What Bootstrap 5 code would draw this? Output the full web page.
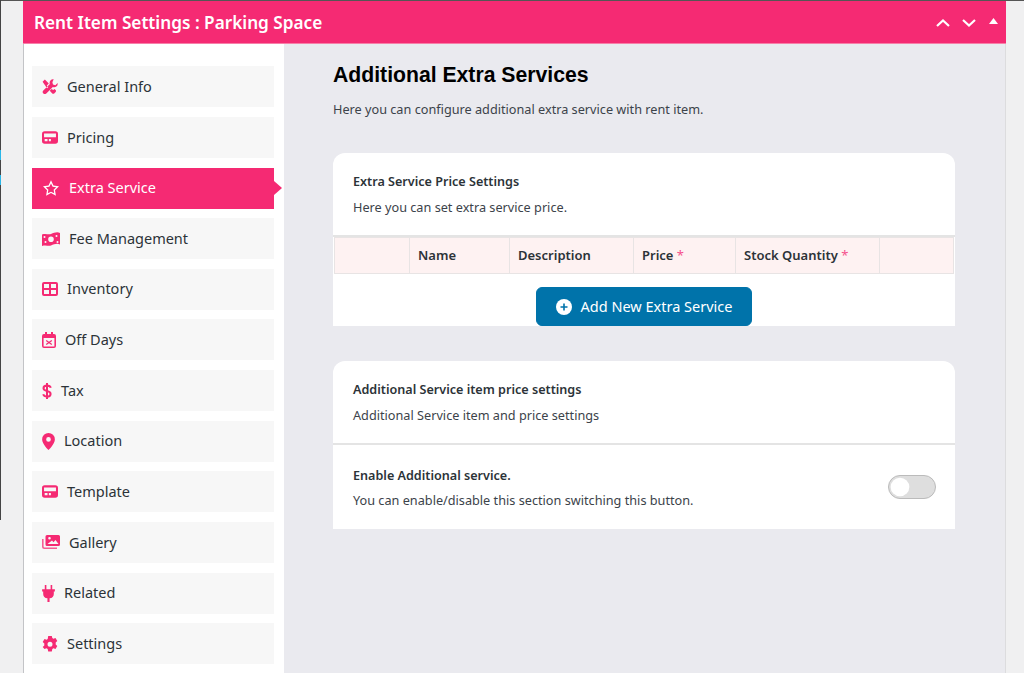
<!DOCTYPE html>
<html>
<head>
    <title>Rent Item Settings</title>
    <link href="https://cdn.jsdelivr.net/npm/bootstrap@5.3.3/dist/css/bootstrap.min.css" rel="stylesheet">
    <style>
        html, body {
          height: 673px;
          overflow: hidden;
        }
        body {
          background: #f0f0f1;
          font-family: "Noto Sans", "Open Sans", sans-serif;
          font-size: 14px;
          color: #3c434a;
        }
        .edge-line {
          position: absolute;
          left: 0;
          top: 0;
          width: 1px;
          height: 520px;
          background: #444;
        }
        .edge-blue {
          position: absolute;
          left: 0;
          width: 1px;
          height: 10px;
          background: #29b6e8;
        }
        .edge-a { top: 150px; }
        .edge-b { top: 175px; }
        .top-line {
          height: 1px;
          background: #555;
        }
        .settings-box {
          margin-left: 23px;
          width: 983px;
          height: 672px;
          border-left: 1px solid #c3c4c7;
          border-right: 1px solid #dcdcde;
        }
        .settings-head {
          height: 43px;
          background: #f52a73;
          color: #fff;
          padding: 2px 8px 0 11px;
          margin-left: -1px;
          margin-right: -1px;
          border-bottom: 1px solid #f77fa9;
        }
        .settings-head h1 {
          font-size: 17.2px;
          font-weight: 600;
          margin: 0;
          font-family: "Noto Sans", sans-serif;
        }
        .head-arrows svg {
          display: block;
        }
        .arrow-down { margin-left: 12px; }
        .arrow-tri { margin-left: 13px; margin-top: -4px; }
        .side-menu {
          width: 260px;
          background: #fff;
          padding: 22.3px 10px 0 8px;
          flex-shrink: 0;
        }
        .side-link {
          height: 41px;
          margin-bottom: 9.64px;
          background: #f7f7f7;
          color: #2c3338;
          font-size: 14.5px;
          padding-left: 10px;
          gap: 9px;
          position: relative;
          text-decoration: none;
        }
        .side-link svg {
          fill: #f52a73;
          flex-shrink: 0;
        }
        .side-link.on {
          background: #f52a73;
          color: #fff;
        }
        .side-link.on svg {
          fill: #fff;
        }
        .side-link.on::after {
          content: "";
          position: absolute;
          right: -8px;
          top: 50%;
          margin-top: -7px;
          border-left: 8px solid #f52a73;
          border-top: 7px solid transparent;
          border-bottom: 7px solid transparent;
        }
        .main-area {
          flex: 1;
          background: #eaeaef;
          padding: 19px 50px 0 49px;
        }
        .main-area h2 {
          font-family: "Liberation Sans", Arial, sans-serif;
          font-size: 21.2px;
          font-weight: 700;
          color: #000;
          margin: 0 0 12px 0;
          line-height: 24px;
        }
        .main-intro {
          font-size: 12.7px;
          margin-bottom: 34px;
          line-height: 20px;
        }
        .box-card {
          background: #fff;
          border: 0;
          border-radius: 12px 12px 0 0;
          margin-bottom: 35px;
        }
        .box-top {
          padding: 20px 20px 0 20px;
          height: 84px;
          border-bottom: 2px solid #e4e4e4;
        }
        .box-title {
          font-size: 12.6px;
          font-weight: 600;
          color: #2c3338;
          line-height: 18px;
          margin-bottom: 7px;
        }
        .box-text {
          font-size: 12.7px;
          line-height: 18px;
        }
        .rent-table {
          margin: 0 0 0 1px;
          width: 620px;
          table-layout: fixed;
          border-color: #e8e4e4;
        }
        .rent-table th {
          background: #fef2f2;
          height: 36px;
          padding: 0 8px;
          font-size: 13px;
          font-weight: 600;
          color: #2c3338;
          vertical-align: middle;
        }
        .col-blank { width: 75px; }
        .col-name { width: 100px; }
        .col-desc { width: 124px; }
        .col-price { width: 102px; }
        .col-stock { width: 144px; }
        .req {
          color: #f5508c;
          font-weight: 400;
        }
        .add-wrap {
          height: 52px;
          padding-top: 13px;
        }
        .add-btn {
          width: 216px;
          height: 39px;
          background: #0073aa;
          border-color: #0073aa;
          color: #fff;
          font-size: 14.5px;
          border-radius: 6px;
          padding: 0;
          gap: 9px;
        }
        .switch-row {
          height: 84px;
          padding: 0 19px 0 20px;
        }
        .switch-copy {
          padding-top: 1px;
        }
        .switch-row .box-title {
          margin-bottom: 6px;
        }
        .switch-row .form-check {
          margin: 0;
          padding: 0;
          min-height: 0;
        }
        .switch-row .form-check-input {
          width: 48px;
          height: 24px;
          margin: 0;
          background-color: #dedede;
          border-color: #bbb;
          float: none;
          display: block;
          background-image: url("data:image/svg+xml,%3csvg xmlns='http://www.w3.org/2000/svg' viewBox='-4 -4 8 8'%3e%3ccircle r='3.4' fill='%23fff'/%3e%3c/svg%3e");
        }
    </style>
</head>
<body>

<div class="edge-line"></div>
<div class="edge-blue edge-a"></div>
<div class="edge-blue edge-b"></div>
<div class="top-line"></div>

<div class="settings-box d-flex flex-column">

    <!-- Header -->
    <div class="settings-head d-flex flex-shrink-0 align-items-center justify-content-between">
        <h1>Rent Item Settings : Parking Space</h1>
        <div class="head-arrows d-flex align-items-center">
            <svg width="14" height="8" viewBox="0 0 14 8"><path d="M1 7l6-5.500L13 7" fill="none" stroke="#fff" stroke-width="2.200"/></svg>
            <svg class="arrow-down" width="14" height="8" viewBox="0 0 14 8"><path d="M1 1l6 5.500L13 1" fill="none" stroke="#fff" stroke-width="2.200"/></svg>
            <svg class="arrow-tri" width="9" height="6" viewBox="0 0 9 6"><path d="M4.500 0L9 6H0z" fill="#fff"/></svg>
        </div>
    </div>

    <div class="d-flex flex-grow-1">

        <!-- Sidebar -->
        <nav class="side-menu nav flex-column flex-nowrap">
            <a class="side-link d-flex align-items-center" href="#">
                <svg width="16" height="15" viewBox="0 0 18 17"><path d="M.6 3.200L3.200.6l4.400 4.400-2.200 2.300 1.700 1.700-1.400 1.400zM13.200.4a3.900 3.900 0 0 0-4.300 5.300L1.400 13.100a2.300 2.300 0 0 0 3.400 3.200l7.400-7.300a3.900 3.900 0 0 0 5.400-4.400l-2.500 2.400-2.700-.7-.7-2.500zM10.800 11.200l-2.100 2.100 2.900 3c.6.600 1.600.6 2.200 0l1.600-1.500c.6-.6.600-1.600 0-2.200l-1.400-1.300-1.400 1.300z"/></svg>
                General Info
            </a>
            <a class="side-link d-flex align-items-center" href="#">
                <svg width="16" height="13" viewBox="0 0 18 14"><path fill-rule="evenodd" d="M3 0h12a3 3 0 0 1 3 3v8a3 3 0 0 1-3 3H3a3 3 0 0 1-3-3V3a3 3 0 0 1 3-3zm-.7 2.500v4.200h13.400V2.500zm.7 6.300v2.400h3.200V8.800zm4.700 0v2.400h2.300V8.800z"/></svg>
                Pricing
            </a>
            <a class="side-link on d-flex align-items-center" href="#">
                <svg width="18" height="16" viewBox="-1.500 0 27 23"><path fill-rule="evenodd" d="M12 0l3.700 7.600 8.300 1.200-6 5.900 1.400 8.300L12 19.100l-7.400 3.900L6 14.700 0 8.800l8.300-1.200zm0 4.600L9.600 9.500l-5.400.8 3.900 3.800-.9 5.400 4.800-2.500 4.800 2.500-.9-5.400 3.900-3.800-5.400-.8z"/></svg>
                Extra Service
            </a>
            <a class="side-link d-flex align-items-center" href="#">
                <svg width="18" height="14" viewBox="0 0 18 14"><path fill-rule="evenodd" d="M0 2.500C4 1 6 3 9 2s6-2.500 9-1v11.500c-3-1.500-6 0-9 1s-5-1-9 .5zM9 4.500a2.800 2.800 0 1 0 0 5.600 2.800 2.800 0 0 0 0-5.600zM2.500 4a1 1 0 1 0 0 2 1 1 0 0 0 0-2zm13 5a1 1 0 1 0 0 2 1 1 0 0 0 0-2zm-1-6a1 1 0 1 0 0 2 1 1 0 0 0 0-2zm-11 6a1 1 0 1 0 0 2 1 1 0 0 0 0-2z"/></svg>
                Fee Management
            </a>
            <a class="side-link d-flex align-items-center" href="#">
                <svg width="16" height="14" viewBox="0 0 16 14"><path fill-rule="evenodd" d="M2 0h12a2 2 0 0 1 2 2v10a2 2 0 0 1-2 2H2a2 2 0 0 1-2-2V2a2 2 0 0 1 2-2zm0 2v4h5V2zm7 0v4h5V2zM2 8v4h5V8zm7 0v4h5V8z"/></svg>
                Inventory
            </a>
            <a class="side-link d-flex align-items-center" href="#">
                <svg width="14" height="16" viewBox="0 0 14 16"><path fill-rule="evenodd" d="M3 0h2v2h4V0h2v2h1a2 2 0 0 1 2 2v10a2 2 0 0 1-2 2H2a2 2 0 0 1-2-2V4a2 2 0 0 1 2-2h1zM1.600 6v8.400h10.800V6zm3 2l2.400 1.700L9.400 8l.8.900L8 10.500l2.200 1.600-.8.900L7 11.300 4.600 13l-.8-.9L6 10.500 3.800 8.900z"/></svg>
                Off Days
            </a>
            <a class="side-link d-flex align-items-center" href="#">
                <svg width="10" height="16" viewBox="0 0 10 16"><path d="M8.800 4.800C8.300 3.200 6.800 2.600 5 2.600 3 2.600 1.500 3.600 1.500 5.300 1.500 7 3 7.500 5 8s3.600 1.100 3.600 2.900c0 1.700-1.600 2.600-3.600 2.600-1.800 0-3.300-.7-3.800-2.300M5 0v16" fill="none" stroke="#f52a73" stroke-width="2"/></svg>
                Tax
            </a>
            <a class="side-link d-flex align-items-center" href="#">
                <svg width="13" height="17" viewBox="0 0 12 16"><path fill-rule="evenodd" d="M6 0a6 6 0 0 1 6 6c0 4-6 10-6 10S0 10 0 6a6 6 0 0 1 6-6zm0 3.800a2.200 2.200 0 1 0 0 4.400 2.200 2.200 0 0 0 0-4.400z"/></svg>
                Location
            </a>
            <a class="side-link d-flex align-items-center" href="#">
                <svg width="16" height="13" viewBox="0 0 18 14"><path fill-rule="evenodd" d="M3 0h12a3 3 0 0 1 3 3v8a3 3 0 0 1-3 3H3a3 3 0 0 1-3-3V3a3 3 0 0 1 3-3zm-.7 2.500v4.200h13.400V2.500zm.7 6.300v2.400h3.200V8.800zm4.700 0v2.400h2.300V8.800z"/></svg>
                Template
            </a>
            <a class="side-link d-flex align-items-center" href="#">
                <svg width="18" height="14" viewBox="0 0 18 14"><path fill-rule="evenodd" d="M5 0h11.500A1.500 1.500 0 0 1 18 1.500v8a1.500 1.500 0 0 1-1.500 1.500H5a1.500 1.500 0 0 1-1.500-1.500v-8A1.500 1.500 0 0 1 5 0zm.500 9h11l-3-4-2 2.300L10 5.500zM7.500 2a1.300 1.300 0 1 0 0 2.600 1.300 1.300 0 0 0 0-2.600z"/><path d="M0 4h1.600v7.500c0 .5.400.9.900.9H15V14H2.500A2.500 2.500 0 0 1 0 11.500z" opacity=".75"/></svg>
                Gallery
            </a>
            <a class="side-link d-flex align-items-center" href="#">
                <svg width="13" height="17" viewBox="0 0 12 16"><path d="M2.500 0H4v4h4V0h1.500v4H12v2h-1v2.500a4 4 0 0 1-4 3.900V16H5v-3.600a4 4 0 0 1-4-3.900V6H0V4h2.500z"/></svg>
                Related
            </a>
            <a class="side-link d-flex align-items-center" href="#">
                <svg width="16" height="16" viewBox="0 0 16 16"><path fill-rule="evenodd" d="M6.200 0h3.600l.5 2.100 1.100.6 2.100-.7 1.800 3.100-1.600 1.500v1.800l1.600 1.500-1.800 3.100-2.100-.7-1.100.6-.5 2.500H6.200l-.5-2.500-1.100-.6-2.100.7L.7 10.900l1.600-1.500V7.600L.7 6.100 2.500 3l2.100.7 1.100-.6zM8 5.700a2.500 2.500 0 1 0 0 5 2.500 2.500 0 0 0 0-5z"/></svg>
                Settings
            </a>
        </nav>

        <!-- Main -->
        <div class="main-area">
            <h2>Additional Extra Services</h2>
            <p class="main-intro">Here you can configure additional extra service with rent item.</p>

            <div class="card box-card">
                <div class="box-top">
                    <div class="box-title">Extra Service Price Settings</div>
                    <div class="box-text">Here you can set extra service price.</div>
                </div>
                <table class="table table-bordered rent-table">
                    <thead>
                        <tr>
                            <th class="col-blank"></th>
                            <th class="col-name">Name</th>
                            <th class="col-desc">Description</th>
                            <th class="col-price">Price <span class="req">*</span></th>
                            <th class="col-stock">Stock Quantity <span class="req">*</span></th>
                            <th></th>
                        </tr>
                    </thead>
                </table>
                <div class="add-wrap d-flex justify-content-center">
                    <button type="button" class="btn add-btn d-flex align-items-center justify-content-center">
                        <svg width="16" height="16" viewBox="0 0 16 16"><circle cx="8" cy="8" r="8" fill="#fff"/><path d="M8 4.500v7M4.500 8h7" stroke="#0073aa" stroke-width="1.600"/></svg>
                        Add New Extra Service
                    </button>
                </div>
            </div>

            <div class="card box-card">
                <div class="box-top">
                    <div class="box-title">Additional Service item price settings</div>
                    <div class="box-text">Additional Service item and price settings</div>
                </div>
                <div class="switch-row d-flex align-items-center justify-content-between">
                    <div class="switch-copy">
                        <div class="box-title">Enable Additional service.</div>
                        <div class="box-text">You can enable/disable this section switching this button.</div>
                    </div>
                    <div class="form-check form-switch">
                        <input class="form-check-input" type="checkbox" role="switch">
                    </div>
                </div>
            </div>
        </div>
    </div>
</div>

</body>
</html>
